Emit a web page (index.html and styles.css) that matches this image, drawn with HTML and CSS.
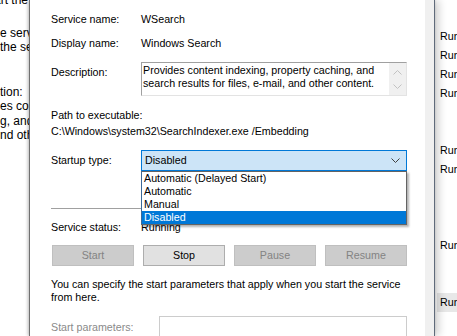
FILE: index.html
```html
<!DOCTYPE html>
<html lang="en">
  <head>
    <meta charset="UTF-8" />
    <meta name="viewport" content="width=device-width, initial-scale=1.0" />
    <title>Windows Search Properties</title>
    <link rel="stylesheet" href="styles.css">
  </head>
  <body>
    <div class="screen">
      <!-- Services console behind the dialog -->
      <div class="services">
        <div class="pane-left">
          <p class="frag frag-top">art the service</p>
          <p class="frag">e service</p>
          <p class="frag">the service</p>
          <p class="frag gap">tion:</p>
          <p class="frag">es content</p>
          <p class="frag">g, and</p>
          <p class="frag">nd other</p>
        </div>
        <div class="pane-right">
          <div class="cell">Running</div>
          <div class="cell">Running</div>
          <div class="cell">Running</div>
          <div class="cell">Running</div>
          <div class="cell"></div>
          <div class="cell"></div>
          <div class="cell">Running</div>
          <div class="cell">Running</div>
          <div class="cell"></div>
          <div class="cell"></div>
          <div class="cell"></div>
          <div class="cell">Running</div>
          <div class="cell"></div>
          <div class="cell"></div>
          <div class="cell selected">Running</div>
        </div>
      </div>

      <!-- Properties dialog -->
      <div class="dialog">
        <div class="page">
          <div class="row first">
            <span class="label">Service name:</span>
            <span>WSearch</span>
          </div>
          <div class="row second">
            <span class="label">Display name:</span>
            <span>Windows Search</span>
          </div>
          <div class="row desc-row">
            <span class="label desc-label">Description:</span>
            <div class="desc-box">
              <div class="desc-text">Provides content indexing, property caching, and search results for files, e-mail, and other content.</div>
              <div class="scrollbar">
                <svg width="9" height="5" viewBox="0 0 9 5"><polyline points="0.5,4.5 4.5,0.5 8.5,4.5" fill="none" stroke="#c2c2c2" /></svg>
                <svg width="9" height="5" viewBox="0 0 9 5"><polyline points="0.5,0.5 4.5,4.5 8.5,0.5" fill="none" stroke="#c2c2c2" /></svg>
              </div>
            </div>
          </div>
          <div class="path-label">Path to executable:</div>
          <div class="path">C:\Windows\system32\SearchIndexer.exe /Embedding</div>
          <div class="row startup">
            <span class="label">Startup type:</span>
            <div class="combo">
              <div class="combo-box">
                <span>Disabled</span>
                <svg width="9" height="5" viewBox="0 0 9 5"><polyline points="0.5,0.5 4.5,4.5 8.5,0.5" fill="none" stroke="#404040" /></svg>
              </div>
              <ul class="combo-list">
                <li>Automatic (Delayed Start)</li>
                <li>Automatic</li>
                <li>Manual</li>
                <li class="active">Disabled</li>
              </ul>
            </div>
          </div>
          <div class="separator"></div>
          <div class="row status">
            <span class="label">Service status:</span>
            <span>Running</span>
          </div>
          <div class="buttons">
            <button class="btn" disabled>Start</button>
            <button class="btn">Stop</button>
            <button class="btn" disabled>Pause</button>
            <button class="btn" disabled>Resume</button>
          </div>
          <p class="hint">You can specify the start parameters that apply when you start the service from here.</p>
          <div class="row params">
            <span class="label params-label">Start parameters:</span>
            <div class="params-input"></div>
          </div>
        </div>
      </div>
    </div>
  </body>
</html>
```

FILE: styles.css
```css
body {
  margin: 0;
  font-family: "Liberation Sans", Arial, sans-serif;
  font-size: 10.7px;
  color: #000;
  background: #fff;
  overflow: hidden;
}
.screen {
  position: relative;
  width: 457px;
  height: 336px;
  overflow: hidden;
}
.services {
  display: flex;
  justify-content: space-between;
  height: 100%;
  background: #fff;
}
.pane-left {
  width: 29px;
  overflow: hidden;
  white-space: nowrap;
  font-size: 12px;
  padding-top: 25px;
}
.frag {
  margin: 0;
  line-height: 14.5px;
  height: 14.5px;
}
.frag-top {
  margin-top: -32px;
  margin-bottom: 18px;
  margin-left: -6px;
}
.frag.gap {
  margin-top: 30px;
}
.pane-right {
  width: 20px;
  padding-top: 27px;
  overflow: hidden;
  white-space: nowrap;
}
.cell {
  height: 19px;
  line-height: 19px;
  padding-left: 3px;
}
.cell.selected {
  background: #e8e8e8;
}
.dialog {
  position: absolute;
  left: 29px;
  top: 0;
  bottom: 0;
  width: 404px;
  display: flex;
  background: #f0f0f0;
  border-left: 1px solid #707070;
  border-right: 1px solid #5f6a7a;
  box-shadow: -1px 0 3px rgba(0, 0, 0, 0.25), 4px 0 8px rgba(0, 0, 0, 0.18);
}
.page {
  width: 395px;
  box-sizing: border-box;
  background: #fff;
  padding: 13px 18px 0 21px;
  line-height: 13px;
}
.row {
  display: flex;
  align-items: center;
}
.label {
  width: 90px;
  flex: none;
}
.second {
  margin-top: 11px;
}
.desc-row {
  margin-top: 12px;
  align-items: flex-start;
}
.desc-label {
  margin-top: 4px;
}
.desc-box {
  display: flex;
  width: 266px;
  height: 34px;
  box-sizing: border-box;
  border: 1px solid;
  border-color: #a0a0a0 #e3e3e3 #e3e3e3 #a0a0a0;
}
.desc-text {
  flex: 1;
  padding: 1px 0 0 1px;
}
.scrollbar {
  width: 17px;
  background: #f0f0f0;
  display: flex;
  flex-direction: column;
  align-items: center;
  justify-content: space-between;
  padding: 7px 0 6px;
  box-sizing: border-box;
}
.path-label {
  margin-top: 13px;
}
.path {
  margin-top: 3px;
}
.startup {
  margin-top: 12px;
}
.combo {
  position: relative;
  width: 267px;
}
.combo-box {
  height: 21px;
  box-sizing: border-box;
  border: 1px solid #0078d7;
  background: #cce4f7;
  display: flex;
  align-items: center;
  justify-content: space-between;
  padding: 0 6px 0 3px;
}
.combo-list {
  position: absolute;
  left: 0;
  right: 0;
  top: 21px;
  margin: 0;
  padding: 0;
  list-style: none;
  background: #fff;
  border: 1px solid #646464;
  border-left-color: #3c6a9a;
  box-shadow: 2px 2px 2px rgba(0, 0, 0, 0.3);
  z-index: 2;
}
.combo-list li {
  height: 13px;
  line-height: 13px;
  padding-left: 2px;
}
.combo-list li.active {
  background: #0078d7;
  color: #fff;
}
.separator {
  margin-top: 37px;
  height: 1px;
  background: #a0a0a0;
}
.status {
  margin-top: 12px;
}
.buttons {
  display: flex;
  gap: 9px;
  margin: 11px 0 0 1px;
}
.btn {
  width: 82px;
  height: 21px;
  padding: 0;
  font: inherit;
  color: #000;
  background: #e1e1e1;
  border: 1px solid #adadad;
}
.btn:disabled {
  color: #838383;
  background: #cccccc;
  border-color: #bfbfbf;
}
.hint {
  margin: 12px 0 0;
}
.params {
  margin-top: 12px;
}
.params-label {
  width: 108px;
  color: #8a8a8a;
}
.params-input {
  flex: 1;
  height: 21px;
  border: 1px solid #cccccc;
  background: #fff;
}
```
